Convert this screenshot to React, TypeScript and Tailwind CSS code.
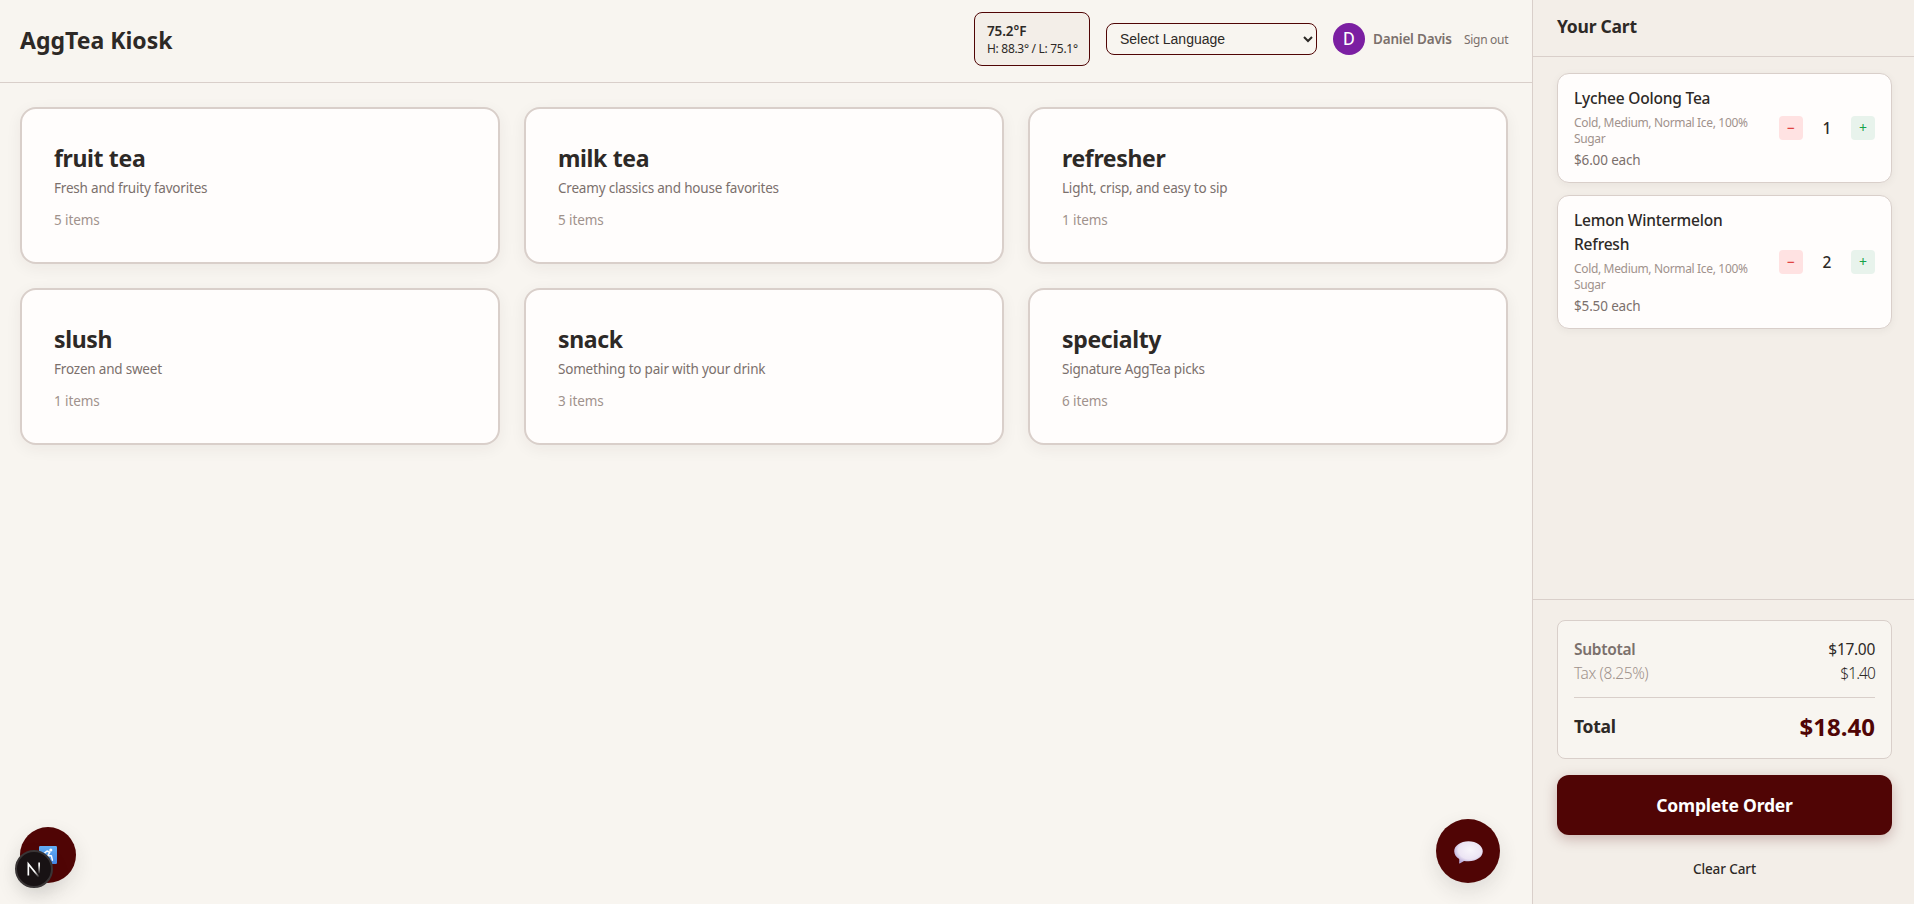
const categories = [
  { name: "fruit tea", description: "Fresh and fruity favorites", count: 5 },
  { name: "milk tea", description: "Creamy classics and house favorites", count: 5 },
  { name: "refresher", description: "Light, crisp, and easy to sip", count: 1 },
  { name: "slush", description: "Frozen and sweet", count: 1 },
  { name: "snack", description: "Something to pair with your drink", count: 3 },
  { name: "specialty", description: "Signature AggTea picks", count: 6 },
];

const cart = [
  {
    name: "Lychee Oolong Tea",
    options: "Cold, Medium, Normal Ice, 100% Sugar",
    price: "$6.00",
    quantity: 1,
  },
  {
    name: "Lemon Wintermelon Refresh",
    options: "Cold, Medium, Normal Ice, 100% Sugar",
    price: "$5.50",
    quantity: 2,
  },
];

const Header = () => {
  return (
    <header className="flex items-center justify-between border-b border-[#d9cfca] pt-3 pr-6 pb-4 pl-5">
      <h1 className="pt-0.5 text-[23px] leading-8 font-bold">AggTea Kiosk</h1>

      <div className="flex items-center">
        <div className="w-[116px] rounded-lg border border-[#500505] bg-[#f3eee8] px-3 py-2 whitespace-nowrap">
          <p className="text-[13.5px] leading-5 font-semibold tracking-[-0.1px]">75.2°F</p>
          <p className="text-xs leading-4 tracking-[-0.3px]">H: 88.3° / L: 75.1°</p>
        </div>

        <select className="ml-4 h-8 w-[211px] rounded-lg border border-[#500505] bg-[#f8f5f0] px-2 pl-[9px] font-['Liberation_Sans',sans-serif] text-sm">
          <option>Select Language</option>
        </select>

        <div className="ml-4 flex size-8 items-center justify-center rounded-full bg-[#7b1fa2] font-[Roboto,sans-serif] text-lg text-white">
          D
        </div>
        <span className="ml-2 w-[79px] text-[13.5px] leading-5 font-semibold tracking-[-0.2px] whitespace-nowrap text-[#7b706c]">
          Daniel Davis
        </span>
        <button className="mt-0.5 ml-3 w-11 text-xs leading-4 tracking-[-0.3px] whitespace-nowrap text-[#7b706c]">
          Sign out
        </button>
      </div>
    </header>
  );
};

const CategoryGrid = () => {
  return (
    <div className="grid grid-cols-3 gap-6 pt-6 pr-6 pl-5">
      {categories.map((category) => (
        <button
          key={category.name}
          className="rounded-2xl border-2 border-[#d9cfca] bg-[#fffdfc] p-8 text-left shadow-[0_4px_16px_rgba(45,41,38,0.06)]"
        >
          <h2 className="pt-px text-[23px] leading-[33px] font-bold tracking-[-0.35px]">
            {category.name}
          </h2>
          <p className="mt-[3px] text-[13.5px] leading-5 tracking-[-0.2px] text-[#7b706c]">
            {category.description}
          </p>
          <p className="mt-3 text-[13.5px] leading-5 tracking-[-0.1px] text-[#9f928c]">
            {category.count} items
          </p>
        </button>
      ))}
    </div>
  );
};

const Cart = () => {
  return (
    <aside className="flex w-[382px] flex-col border-l border-[#d9cfca] bg-[#f3eee8]">
      <div className="h-[57px] border-b border-[#d9cfca] pt-3.5 pl-6">
        <h2 className="text-[17.5px] leading-6 font-bold tracking-[-0.23px]">Your Cart</h2>
      </div>

      <div className="flex-1 space-y-3 pt-4 pr-[22px] pl-6">
        {cart.map((item) => (
          <div
            key={item.name}
            className="flex items-center rounded-xl border border-[#d9cfca] bg-[#fffdfc] px-4 py-3 shadow-[0_2px_8px_rgba(45,41,38,0.05)]"
          >
            <div className="mr-6 flex-1">
              <p className="text-[15.5px] leading-6 font-medium tracking-[-0.2px]">{item.name}</p>
              <p className="mt-[5px] text-xs leading-4 tracking-[-0.34px] text-[#9f928c]">
                {item.options}
              </p>
              <p className="mt-[3px] text-[13.5px] leading-5 tracking-[-0.15px] text-[#7b706c]">
                {item.price} each
              </p>
            </div>
            <div className="flex items-center gap-2">
              <button className="size-6 rounded bg-[#ffe2e2] text-sm leading-6 text-[#dc2626]">−</button>
              <span className="w-8 text-center text-[15.5px] leading-6 font-medium">
                {item.quantity}
              </span>
              <button className="size-6 rounded bg-[#e8f3ec] text-sm leading-6 text-[#16a34a]">+</button>
            </div>
          </div>
        ))}
      </div>

      <div className="h-[305px] border-t border-[#d9cfca] pt-5 pr-[22px] pl-6">
        <div className="h-[139px] rounded-lg border border-[#d9cfca] bg-[#f8f5f0] p-4">
          <div className="flex justify-between text-[15.5px] leading-6 tracking-[-0.3px]">
            <span className="font-semibold text-[#7b706c]">Subtotal</span>
            <span>$17.00</span>
          </div>
          <div className="flex justify-between text-[15.5px] leading-6 font-light">
            <span className="tracking-[-0.4px] text-[#9f928c]">Tax (8.25%)</span>
            <span className="tracking-[-0.9px]">$1.40</span>
          </div>
          <div className="mt-3 flex items-center justify-between border-t border-[#d9cfca] pt-[13px]">
            <span className="pb-0.5 text-[17.5px] font-bold tracking-[-0.3px]">Total</span>
            <span className="text-2xl leading-8 font-bold text-[#500505]">$18.40</span>
          </div>
        </div>

        <button className="mt-4 h-15 w-full rounded-xl bg-[#500505] text-[17.5px] font-bold tracking-[-0.2px] text-white shadow-[0_4px_14px_rgba(80,5,5,0.25)]">
          Complete Order
        </button>
        <button className="mt-6 w-full text-[13.5px] leading-5 font-medium tracking-[-0.1px]">
          Clear Cart
        </button>
      </div>
    </aside>
  );
};

const AccessibilityIcon = () => {
  return (
    <svg className="size-[18px]" viewBox="0 0 18 18" fill="none">
      <defs>
        <linearGradient id="tile" x1="0" y1="0" x2="0" y2="18" gradientUnits="userSpaceOnUse">
          <stop stopColor="#62aef5" />
          <stop offset="1" stopColor="#4688e6" />
        </linearGradient>
      </defs>
      <rect width="18" height="18" rx="1.2" fill="url(#tile)" />
      <circle cx="11.8" cy="4" r="1.6" fill="#fff" />
      <path
        d="M5.8 6.8 8 5l2.8 1.3L8.6 9.8h3.8l1 4.4"
        stroke="#fff"
        strokeWidth="1.5"
        strokeLinecap="round"
        strokeLinejoin="round"
      />
      <path d="M5 9.4a3.9 3.9 0 1 0 5.8 4.8" stroke="#fff" strokeWidth="1.3" strokeLinecap="round" />
    </svg>
  );
};

const ChatIcon = () => {
  return (
    <svg className="mt-0.5 h-[23px] w-[29px]" viewBox="0 0 29 23">
      <defs>
        <radialGradient id="bubble" cx="0.55" cy="0.4" r="0.62">
          <stop stopColor="#f8f5fb" />
          <stop offset="0.65" stopColor="#ece5f4" />
          <stop offset="1" stopColor="#b4a4d4" />
        </radialGradient>
      </defs>
      <path
        d="M14.5.2C6.5.2.2 4.6.2 10.3c0 3.3 2 6 5 7.7.1 1.600.1 2.800-.1 4.100 0 .4.3.5.6.3 1.500-.7 3-1.500 4.300-2.500 1.500.3 3 .4 4.500.4 8 0 14.300-4.400 14.300-10S22.500.2 14.500.2z"
        fill="url(#bubble)"
      />
    </svg>
  );
};

const DevBadge = () => {
  return (
    <div className="fixed bottom-4 left-[15px] flex size-[38px] items-center justify-center rounded-full border-2 border-[#393536] bg-[#181214] shadow-[0_8px_20px_rgba(0,0,0,0.1)]">
      <svg className="mr-px size-[18px]" viewBox="0 0 14 14" fill="none">
        <defs>
          <linearGradient id="diagonal" x1="8" y1="8.5" x2="11.5" y2="13" gradientUnits="userSpaceOnUse">
            <stop stopColor="#fff" />
            <stop offset="1" stopColor="#fff" stopOpacity="0" />
          </linearGradient>
          <linearGradient id="stem" x1="0" y1="1" x2="0" y2="11" gradientUnits="userSpaceOnUse">
            <stop offset="0.3" stopColor="#fff" />
            <stop offset="1" stopColor="#fff" stopOpacity="0" />
          </linearGradient>
        </defs>
        <path d="M2.6 12V3L10.8 13.2" stroke="url(#diagonal)" strokeWidth="1.3" />
        <path d="M11 2v8.5" stroke="url(#stem)" strokeWidth="1.3" />
      </svg>
    </div>
  );
};

export default function App() {
  return (
    <div className="flex h-screen overflow-hidden bg-[#f8f5f0] font-['Noto_Sans',sans-serif] text-[#2d2926]">
      <main className="flex-1">
        <Header />
        <CategoryGrid />
      </main>
      <Cart />

      <button className="fixed bottom-[21px] left-5 flex size-14 items-center justify-center rounded-full bg-[#500505] shadow-[0_8px_20px_rgba(45,41,38,0.12)]">
        <AccessibilityIcon />
      </button>
      <DevBadge />
      <button className="fixed bottom-[21px] left-[1436px] flex size-16 items-center justify-center rounded-full bg-[#500505] shadow-[0_8px_20px_rgba(45,41,38,0.12)]">
        <ChatIcon />
      </button>
    </div>
  );
}
